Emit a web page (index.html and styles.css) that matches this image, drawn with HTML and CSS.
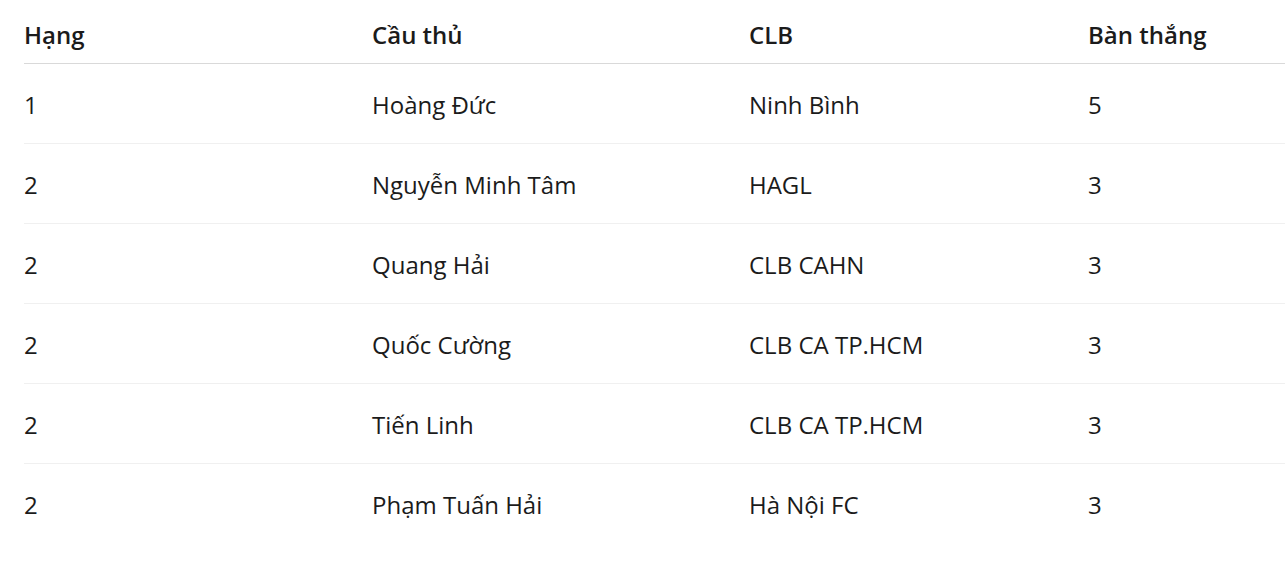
FILE: index.html
```html
<!DOCTYPE html>
<html lang="vi">
<head>
<meta charset="utf-8">
<title>Vua phá lưới</title>
<link rel="stylesheet" href="styles.css">
</head>
<body>
<table class="scorers">
  <thead>
    <tr>
      <th class="c-rank">Hạng</th>
      <th class="c-player">Cầu thủ</th>
      <th class="c-club">CLB</th>
      <th class="c-goals">Bàn thắng</th>
    </tr>
  </thead>
  <tbody>
    <tr><td>1</td><td>Hoàng Đức</td><td>Ninh Bình</td><td>5</td></tr>
    <tr><td>2</td><td>Nguyễn Minh Tâm</td><td>HAGL</td><td>3</td></tr>
    <tr><td>2</td><td>Quang Hải</td><td>CLB CAHN</td><td>3</td></tr>
    <tr><td>2</td><td>Quốc Cường</td><td>CLB CA TP.HCM</td><td>3</td></tr>
    <tr><td>2</td><td>Tiến Linh</td><td>CLB CA TP.HCM</td><td>3</td></tr>
    <tr><td>2</td><td>Phạm Tuấn Hải</td><td>Hà Nội FC</td><td>3</td></tr>
  </tbody>
</table>
</body>
</html>
```

FILE: styles.css
```css
html, body {
  margin: 0;
  padding: 0;
  background: #ffffff;
}
body {
  padding-left: 24px;
  font-family: "Open Sans", "Noto Sans", sans-serif;
  color: #1b1b1b;
}
.scorers {
  border-collapse: collapse;
  table-layout: fixed;
  width: 1261px;
  font-size: 24px;
}
.scorers th,
.scorers td {
  text-align: left;
  padding: 0;
  vertical-align: middle;
  line-height: 1.3;
}
.c-rank { width: 348px; }
.c-player { width: 377px; }
.c-club { width: 339px; }
.scorers thead th {
  height: 63px;
  font-weight: 600;
  border-bottom: 1px solid #d9d9d9;
  padding-top: 6px;
  box-sizing: border-box;
}
.scorers tbody td {
  height: 75px;
  padding-top: 4px;
  border-bottom: 1px solid #f0f0f0;
  font-weight: 400;
}
.scorers tbody tr:last-child td {
  border-bottom: none;
}
```
